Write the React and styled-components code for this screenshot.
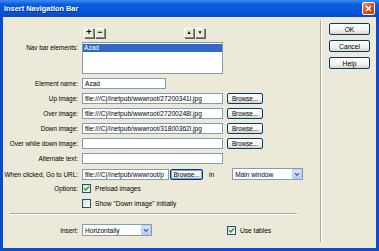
import React from 'react'
import styled, { createGlobalStyle } from 'styled-components'

const GlobalStyle = createGlobalStyle`
  html, body {
    margin: 0;
    padding: 0;
    background: #ECE9D8;
  }
  body {
    font-family: "Liberation Sans", Arial, sans-serif;
  }
`

const fileRows = [
  { label: 'Up image:', value: 'file:///C|/Inetpub/wwwroot/27200341l.jpg' },
  { label: 'Over image:', value: 'file:///C|/Inetpub/wwwroot/27200248l.jpg' },
  { label: 'Down image:', value: 'file:///C|/Inetpub/wwwroot/31800362l.jpg' },
  { label: 'Over while down image:', value: '' },
]

const Check = () => (
  <svg width="7" height="7" viewBox="0 0 7 7">
    <path d="M1 3.2 L2.8 5 L6 1.6" fill="none" stroke="#21A121" strokeWidth="1.4" />
  </svg>
)

const Chevron = () => (
  <svg width="6" height="5" viewBox="0 0 6 5">
    <path d="M1 1.2 L3 3.4 L5 1.2" fill="none" stroke="#4D6185" strokeWidth="1.2" />
  </svg>
)

const App = () => {
  return (
    <>
      <GlobalStyle />
      <Window>
        <TitleBar>
          <Title>Insert Navigation Bar</Title>
          <CloseButton>
            <svg width="7" height="7" viewBox="0 0 7 7">
              <path d="M1 1 L6 6 M6 1 L1 6" stroke="#fff" strokeWidth="1.5" />
            </svg>
          </CloseButton>
        </TitleBar>
        <Body>
          <FormPane>
            <Form>
              <Row>
                <Label />
                <Toolbar>
                  <ToolGroup>
                    <ToolButton>+</ToolButton>
                    <ToolButton>−</ToolButton>
                  </ToolGroup>
                  <ToolGroup>
                    <ToolButton small>▲</ToolButton>
                    <ToolButton small>▼</ToolButton>
                  </ToolGroup>
                </Toolbar>
              </Row>
              <Row height={32}>
                <Label top>Nav bar elements:</Label>
                <ListBox>
                  <ListItem selected>Azad</ListItem>
                </ListBox>
              </Row>
              <Row>
                <Label>Element name:</Label>
                <Field width={84}>Azad</Field>
              </Row>
              {fileRows.map(r => (
                <Row key={r.label}>
                  <Label>{r.label}</Label>
                  <Cell>
                    <Field width={141}>{r.value}</Field>
                    <Button width={36}>Browse...</Button>
                  </Cell>
                </Row>
              ))}
              <Row>
                <Label>Alternate text:</Label>
                <Field width={141} />
              </Row>
              <Row>
                <Label>When clicked, Go to URL:</Label>
                <Cell gap={1}>
                  <Field width={87}>file:///C|/Inetpub/wwwroot/p</Field>
                  <Button width={33} focused>Browse...</Button>
                  <InText>in</InText>
                  <Select width={71}>
                    <span>Main window</span>
                    <DropArrow><Chevron /></DropArrow>
                  </Select>
                </Cell>
              </Row>
              <Row>
                <Label>Options:</Label>
                <CheckLine>
                  <Checkbox><Check /></Checkbox>
                  Preload images
                </CheckLine>
              </Row>
              <Row>
                <Label />
                <CheckLine>
                  <Checkbox />
                  Show "Down image" initially
                </CheckLine>
              </Row>
            </Form>
            <HLine />
            <Row height={12}>
              <Label>Insert:</Label>
              <Cell gap={75}>
                <Select width={70}>
                  <span>Horizontally</span>
                  <DropArrow><Chevron /></DropArrow>
                </Select>
                <CheckLine>
                  <Checkbox><Check /></Checkbox>
                  Use tables
                </CheckLine>
              </Cell>
            </Row>
          </FormPane>
          <ButtonPane>
            <Button width={41} height={12} big>OK</Button>
            <Button width={41} height={12} big>Cancel</Button>
            <Button width={41} height={12} big>Help</Button>
          </ButtonPane>
        </Body>
      </Window>
    </>
  )
}

const Window = styled.div`
  width: 379px;
  height: 251px;
  display: flex;
  flex-direction: column;
  background: #0A4CD0;
  overflow: hidden;
`
const TitleBar = styled.div`
  height: 17px;
  flex: none;
  display: flex;
  align-items: center;
  justify-content: space-between;
  padding: 0 4px 0 4px;
  box-sizing: border-box;
  background: linear-gradient(#3C8DF5 0%, #0C5EDC 25%, #0553D8 75%, #0A48C0 100%);
`
const Title = styled.span`
  color: #fff;
  font-weight: bold;
  font-size: 7.4px;
  text-shadow: 1px 1px 0 #0A2A80;
`
const CloseButton = styled.div`
  width: 13px;
  height: 13px;
  box-sizing: border-box;
  border: 1px solid #fff;
  border-radius: 2px;
  background: linear-gradient(135deg, #F09A7A, #E0481F 50%, #C2391A);
  display: flex;
  align-items: center;
  justify-content: center;
`
const Body = styled.div`
  flex: 1;
  margin: 0 3px 3px 3px;
  background: #ECE9D8;
  display: flex;
`
const FormPane = styled.div`
  width: 317px;
  padding-top: 10px;
  display: flex;
  flex-direction: column;
`
const Form = styled.div`
  display: flex;
  flex-direction: column;
  gap: 4px;
`
const Row = styled.div`
  display: grid;
  grid-template-columns: 75px auto;
  column-gap: 4px;
  align-items: center;
  height: ${({ height }) => height || 11}px;
`
const Label = styled.div`
  font-size: 6.4px;
  text-align: right;
  white-space: nowrap;
  color: #000;
  align-self: ${({ top }) => (top ? 'start' : 'center')};
  padding-top: ${({ top }) => (top ? 2 : 0)}px;
`
const Cell = styled.div`
  display: flex;
  align-items: center;
  gap: ${({ gap }) => (gap === undefined ? 4 : gap)}px;
  height: 100%;
`
const Toolbar = styled.div`
  width: 121px;
  display: flex;
  justify-content: space-between;
  align-items: center;
  padding-left: 2px;
`
const ToolGroup = styled.div`
  display: flex;
  gap: 1px;
`
const ToolButton = styled.div`
  width: 10px;
  height: 10px;
  box-sizing: border-box;
  border: 1px solid #8E8C82;
  border-top-color: #fff;
  border-left-color: #fff;
  box-shadow: 1px 1px 0 #5A5A55;
  background: #ECE9D8;
  display: flex;
  align-items: center;
  justify-content: center;
  font-weight: bold;
  font-size: ${({ small }) => (small ? 5 : 9)}px;
  line-height: 1;
  color: #000;
`
const ListBox = styled.div`
  width: 141px;
  height: 32px;
  box-sizing: border-box;
  border: 1px solid #7F9DB9;
  background: #fff;
  padding: 1px 0;
`
const ListItem = styled.div`
  height: 8px;
  line-height: 8px;
  font-size: 6.6px;
  padding-left: 1px;
  background: ${({ selected }) => (selected ? '#316AC5' : 'transparent')};
  color: ${({ selected }) => (selected ? '#fff' : '#000')};
`
const Field = styled.div`
  width: ${({ width }) => width}px;
  height: 11px;
  box-sizing: border-box;
  border: 1px solid #7F9DB9;
  background: #fff;
  font-size: 6.6px;
  line-height: 9px;
  padding-left: 2px;
  white-space: nowrap;
  overflow: hidden;
  color: #000;
`
const Button = styled.div`
  width: ${({ width }) => width}px;
  height: ${({ height }) => height || 11}px;
  box-sizing: border-box;
  border: 1px solid #003C74;
  border-radius: 2px;
  background: linear-gradient(#FFFFFF, #F3F2EC 60%, #D8D5C8);
  box-shadow: ${({ focused }) => (focused ? 'inset 0 0 0 1px #7FA1DC' : 'none')};
  font-size: ${({ big }) => (big ? 6.7 : 6.3)}px;
  color: #000;
  display: flex;
  align-items: center;
  justify-content: center;
  white-space: nowrap;
`
const InText = styled.span`
  font-size: 6.6px;
  margin: 0 17px 0 5px;
`
const Select = styled.div`
  width: ${({ width }) => width}px;
  height: 12px;
  box-sizing: border-box;
  border: 1px solid #7F9DB9;
  background: #fff;
  display: flex;
  align-items: center;
  justify-content: space-between;
  font-size: 6.6px;
  padding-left: 2px;
`
const DropArrow = styled.div`
  width: 10px;
  height: 10px;
  box-sizing: border-box;
  border: 1px solid #B9CBF3;
  border-radius: 1px;
  background: linear-gradient(#DCE7FD, #B7CCF7);
  display: flex;
  align-items: center;
  justify-content: center;
`
const CheckLine = styled.div`
  display: flex;
  align-items: center;
  gap: 4px;
  font-size: 6.6px;
  white-space: nowrap;
  color: #000;
`
const Checkbox = styled.div`
  width: 9px;
  height: 9px;
  box-sizing: border-box;
  border: 1px solid #1C5180;
  background: linear-gradient(135deg, #DCDCD7, #FFFFFF);
  display: flex;
  align-items: center;
  justify-content: center;
`
const HLine = styled.div`
  margin: 4px 0 9px 7px;
  width: 287px;
  border-top: 1px solid #ACA899;
  border-bottom: 1px solid #fff;
`
const ButtonPane = styled.div`
  flex: 1;
  margin: 3px 0 6px 0;
  border-left: 1px solid #ACA899;
  box-shadow: inset 1px 0 0 #fff;
  padding: 3px 0 0 8px;
  display: flex;
  flex-direction: column;
  gap: 5px;
`

export default App
